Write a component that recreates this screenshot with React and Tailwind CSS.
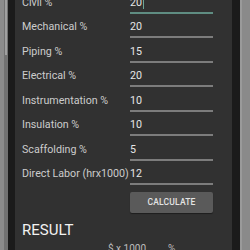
import React from "react";

const rows = [
  ["Civil %", "20"],
  ["Mechanical %", "20"],
  ["Piping %", "15"],
  ["Electrical %", "20"],
  ["Instrumentation %", "10"],
  ["Insulation %", "10"],
  ["Scaffolding %", "5"],
  ["Direct Labor (hrx1000)", "12"],
];

export default function App() {
  return (
    <div
      className="w-[250px] h-[250px] overflow-hidden flex bg-[#8a8a8a]"
      style={{ fontFamily: "Roboto, 'Liberation Sans', sans-serif" }}
    >
      <div className="w-[4px] h-full bg-[#8c8c8c]" />
      <div className="w-[4px] h-full bg-[#727272] flex justify-center">
        <div className="w-[2px] h-[55px] bg-[#a0a0a0]" />
      </div>
      <div className="w-[7px] h-full bg-[#1b1b1b]" />
      <div className="w-[217px] h-full bg-[#313131] pl-[7px] pr-[19px] overflow-hidden">
        <div className="mt-[-10px] flex flex-col">
          {rows.map(([label, value], i) => (
            <div key={label} className="flex h-[24.5px] items-stretch">
              <div className="w-[108px] flex items-end pb-[6px] text-[10.7px] leading-[13px] text-[#cccccc] whitespace-nowrap">
                {label}
              </div>
              <div
                className={
                  "flex-1 flex items-end pb-[3px] mb-[1px] text-[10.7px] leading-[13px] text-[#e6e6e6] border-b-2 " +
                  (i === 0 ? "border-[#5f8d82]" : "border-[#7c7c7c]")
                }
              >
                <span>{value}</span>
                {i === 0 && <span className="w-[1px] h-[12px] bg-[#6aa596] ml-[1px]" />}
              </div>
            </div>
          ))}
        </div>
        <div className="flex justify-end mt-[6px]">
          <div className="w-[83px] h-[21px] bg-[#5a5a5a] rounded-[2px] flex items-center justify-center text-[8.5px] font-medium text-[#e4e4e4] tracking-[0.2px] shadow-[0_1px_1px_rgba(0,0,0,0.4)]">
            CALCULATE
          </div>
        </div>
        <div className="mt-[8px] text-[15px] leading-[18px] text-[#f2f2f2]">RESULT</div>
        <div className="flex text-[10px] leading-[12px] text-[#bdbdbd] mt-[4px]">
          <span className="ml-[86px]">$ x 1000</span>
          <span className="ml-[22px]">%</span>
        </div>
      </div>
      <div className="w-[8px] h-full bg-[#1b1b1b]" />
      <div className="w-[2px] h-full bg-[#9a9a9a]" />
      <div className="flex-1 h-full bg-[#8a8a8a]" />
    </div>
  );
}
